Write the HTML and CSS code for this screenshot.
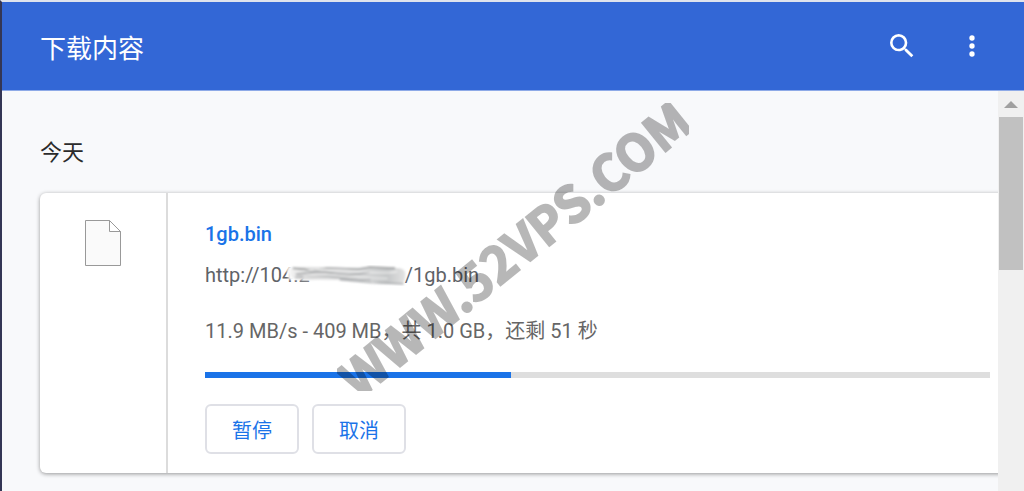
FILE: index.html
```html
<!DOCTYPE html>
<html lang="zh-CN">
<head>
  <meta charset="UTF-8" />
  <meta name="viewport" content="width=device-width, initial-scale=1.0" />
  <title>下载内容</title>
  <link rel="stylesheet" href="styles.css">
</head>
<body>
  <header class="toolbar">
    <h1>下载内容</h1>
    <div class="toolbar-actions">
      <button type="button" class="icon-button" aria-label="搜索">
        <svg viewBox="0 0 24 24"><path d="M15.5 14h-.79l-.28-.27A6.47 6.47 0 0 0 16 9.5 6.5 6.5 0 1 0 9.5 16c1.61 0 3.09-.59 4.23-1.57l.27.28v.79l5 4.99L20.49 19l-4.99-5zm-6 0C7.01 14 5 11.99 5 9.5S7.01 5 9.5 5 14 7.01 14 9.5 11.99 14 9.5 14z"/></svg>
      </button>
      <button type="button" class="icon-button" aria-label="更多操作">
        <svg viewBox="0 0 24 24"><circle cx="12" cy="6" r="2"/><circle cx="12" cy="12" r="2"/><circle cx="12" cy="18" r="2"/></svg>
      </button>
    </div>
  </header>

  <div class="page">
    <main class="downloads">
      <h2>今天</h2>
      <article class="card">
        <div class="file-icon">
          <svg viewBox="0 0 38 48">
            <path d="M1.5 1.5h24l11 11v34h-35z" fill="#fafafa" stroke="#999"/>
            <path d="M25.5 1.5v11h11z" fill="#fff" stroke="#999"/>
          </svg>
        </div>
        <div class="details">
          <a class="name" href="#">1gb.bin</a>
          <a class="url" href="#">http://104.2<span class="redacted"><svg viewBox="0 0 122 22" preserveAspectRatio="none">
            <defs>
              <linearGradient id="smear" x1="0" x2="1">
                <stop offset="0" stop-color="#fff"/>
                <stop offset=".12" stop-color="#dcdcdc"/>
                <stop offset=".6" stop-color="#dadbdc"/>
                <stop offset=".85" stop-color="#c6c8c9"/>
                <stop offset="1" stop-color="#e4e4e4"/>
              </linearGradient>
              <filter id="soft"><feGaussianBlur stdDeviation=".8"/></filter>
            </defs>
            <g filter="url(#soft)" fill="none">
              <path d="M7 2L14 0H112Q122 2 119 10L116 17L87 17L60 14L30 15L8 14Z" fill="#fff"/>
              <path d="M6 5Q11 1 22 2L112 3Q121 4 116 17Q101 19 86 16Q56 13 20 14Q7 13 6 5Z" fill="url(#smear)"/>
              <path d="M12 3L23 4L29 6L44 3L73 4L84 2L108 3" stroke="#969899" stroke-width="1.5"/>
              <path d="M15 9Q33 5 50 8T84 7" stroke="#a2a4a6" stroke-width="1.5"/>
              <path d="M14 12Q33 9 57 12T85 14" stroke="#a6a8aa" stroke-width="1.2"/>
              <path d="M14 6Q22 7 31 5T73 6T110 6" stroke="#f4f4f4"/>
              <path d="M22 11Q43 8 58 10T101 13" stroke="#eee"/>
              <path d="M56 14L86 17L116 18" stroke="#94979a" stroke-width="1.1"/>
            </g>
          </svg></span>/1gb.bin</a>
          <p class="status">11.9 MB/s - 409 MB，共 1.0 GB，还剩 51 秒</p>
          <progress value="39" max="100" aria-label="下载进度"></progress>
          <div class="actions">
            <button type="button">暂停</button>
            <button type="button">取消</button>
          </div>
        </div>
      </article>
    </main>
    <div class="scrollbar">
      <button type="button" aria-label="向上滚动"><svg viewBox="0 0 14 8"><path d="M7 1l7 7H0z"/></svg></button>
      <div class="thumb"></div>
    </div>
  </div>

  <div class="watermark"><div class="watermark-clip"><span>WWW.52VPS.COM</span></div></div>
</body>
</html>
```

FILE: styles.css
```css
:root {
  --toolbar: #3367d6;
  --blue: #1a73e8;
  --page-bg: #f8f9fb;
  --border: #dfe0e6;
  --text: #5f6368;
}

* {
  margin: 0;
  padding: 0;
  box-sizing: border-box;
}

body {
  min-height: 100vh;
  display: flex;
  flex-direction: column;
  position: relative;
  overflow: hidden;
  border-top: 2px solid #dfe3ed;
  border-left: 2px solid #343655;
  background: var(--page-bg);
  color: var(--text);
  font-family: Roboto, "Noto Sans CJK SC", sans-serif;
  font-size: 20px;
}

button {
  font: inherit;
  border: none;
  background: none;
  cursor: pointer;
}

a {
  text-decoration: none;
}

.toolbar {
  display: flex;
  align-items: center;
  justify-content: space-between;
  height: 89px;
  padding: 0 34px 0 38px;
  background: var(--toolbar);
  border-bottom: 1px solid #8eaae7;
  color: #fff;
}

.toolbar h1 {
  font-size: 26px;
  font-weight: 400;
}

.toolbar-actions {
  display: flex;
  gap: 36px;
}

.icon-button {
  width: 34px;
  height: 32px;
}

.icon-button svg {
  display: block;
  width: 32px;
  height: 32px;
  fill: #fff;
}

.page {
  flex: 1;
  display: flex;
}

.downloads {
  flex: 1;
  min-width: 0;
  overflow: hidden;
  padding: 45px 0 16px 38px;
}

.downloads h2 {
  margin-bottom: 23px;
  color: #2b2b2b;
  font-size: 22px;
  font-weight: 400;
  line-height: 34px;
}

.card {
  display: flex;
  margin-right: -8px;
  background: #fff;
  border-radius: 6px;
  box-shadow: 0 1px 4px rgba(0, 0, 0, 0.4);
}

.file-icon {
  width: 128px;
  padding: 26px 0 0 44px;
  border-right: 2px solid #dcdcdc;
}

.file-icon svg {
  display: block;
  width: 38px;
  height: 48px;
}

.details {
  flex: 1;
  padding: 26px 16px 19px 37px;
}

.name,
.url {
  display: block;
  width: fit-content;
  line-height: 30px;
}

.name {
  margin-bottom: 11px;
  color: var(--blue);
  font-weight: 500;
}

.url {
  color: var(--text);
}

.redacted {
  display: inline-block;
  position: relative;
  width: 95px;
}

.redacted svg {
  position: absolute;
  left: -30px;
  bottom: -6px;
  width: 130px;
  height: 23px;
}

.status {
  margin-top: 26px;
  color: #666;
  line-height: 30px;
}

progress {
  display: block;
  width: 100%;
  height: 6px;
  margin: 26px 0;
  border: none;
  appearance: none;
  background: #dedede;
}

progress::-webkit-progress-bar {
  background: #dedede;
}

progress::-webkit-progress-value {
  background: var(--blue);
}

.actions {
  display: flex;
  gap: 13px;
}

.actions button {
  width: 94px;
  height: 50px;
  border: 2px solid var(--border);
  border-radius: 6px;
  color: var(--blue);
}

.scrollbar {
  width: 26px;
  padding: 0 1px;
  background: #f0f0f0;
}

.scrollbar button {
  display: flex;
  align-items: center;
  justify-content: center;
  width: 100%;
  height: 26px;
}

.scrollbar svg {
  width: 14px;
  height: 8px;
  fill: #a0a0a0;
}

.thumb {
  height: 153px;
  background: #c1c1c1;
}

.watermark {
  position: absolute;
  inset: 0;
  display: flex;
  align-items: center;
  justify-content: center;
  pointer-events: none;
}

.watermark-clip {
  display: flex;
  align-items: center;
  justify-content: center;
  width: 352px;
  height: 288px;
  overflow: hidden;
}

.watermark span {
  color: #000;
  font-family: "Noto Sans CJK SC", sans-serif;
  font-size: 50px;
  font-weight: 700;
  -webkit-text-stroke: 2px #000;
  opacity: 0.28;
  transform: rotate(-39deg);
}
```
